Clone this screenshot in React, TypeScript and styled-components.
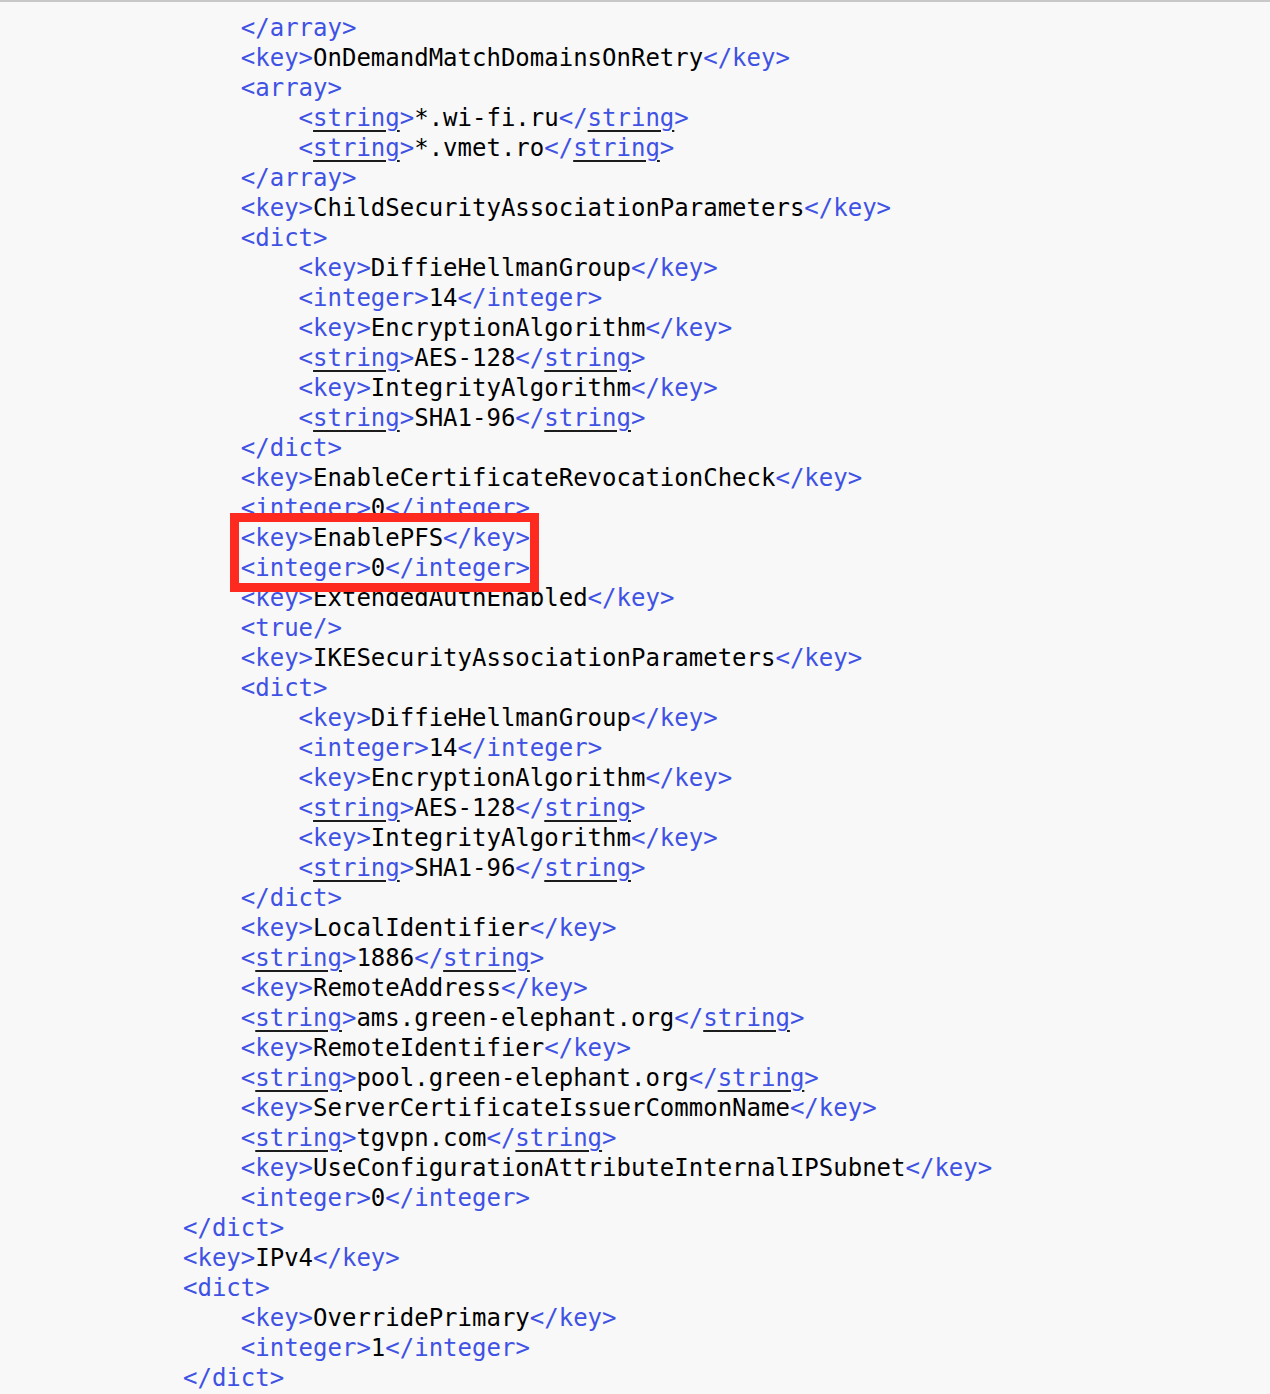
import React from "react"
import styled, { createGlobalStyle } from "styled-components"

type Part = { t: "open" | "close" | "self"; name: string } | { t: "text"; value: string }
type Row = { level: number; parts: Part[] }

const open = (name: string): Part => ({ t: "open", name })
const close = (name: string): Part => ({ t: "close", name })
const text = (value: string): Part => ({ t: "text", value })

const el = (level: number, name: string, value: string): Row => ({
  level,
  parts: [open(name), text(value), close(name)],
})
const tag = (level: number, name: string, closing = false): Row => ({
  level,
  parts: [closing ? close(name) : open(name)],
})

const cryptoDict = (level: number): Row[] => [
  el(level, "key", "DiffieHellmanGroup"),
  el(level, "integer", "14"),
  el(level, "key", "EncryptionAlgorithm"),
  el(level, "string", "AES-128"),
  el(level, "key", "IntegrityAlgorithm"),
  el(level, "string", "SHA1-96"),
]

const before: Row[] = [
  tag(1, "array", true),
  el(1, "key", "OnDemandMatchDomainsOnRetry"),
  tag(1, "array"),
  el(2, "string", "*.wi-fi.ru"),
  el(2, "string", "*.vmet.ro"),
  tag(1, "array", true),
  el(1, "key", "ChildSecurityAssociationParameters"),
  tag(1, "dict"),
  ...cryptoDict(2),
  tag(1, "dict", true),
  el(1, "key", "EnableCertificateRevocationCheck"),
  el(1, "integer", "0"),
]

const highlighted: Row[] = [el(1, "key", "EnablePFS"), el(1, "integer", "0")]

const after: Row[] = [
  el(1, "key", "ExtendedAuthEnabled"),
  { level: 1, parts: [{ t: "self", name: "true" }] },
  el(1, "key", "IKESecurityAssociationParameters"),
  tag(1, "dict"),
  ...cryptoDict(2),
  tag(1, "dict", true),
  el(1, "key", "LocalIdentifier"),
  el(1, "string", "1886"),
  el(1, "key", "RemoteAddress"),
  el(1, "string", "ams.green-elephant.org"),
  el(1, "key", "RemoteIdentifier"),
  el(1, "string", "pool.green-elephant.org"),
  el(1, "key", "ServerCertificateIssuerCommonName"),
  el(1, "string", "tgvpn.com"),
  el(1, "key", "UseConfigurationAttributeInternalIPSubnet"),
  el(1, "integer", "0"),
  tag(0, "dict", true),
  el(0, "key", "IPv4"),
  tag(0, "dict"),
  el(1, "key", "OverridePrimary"),
  el(1, "integer", "1"),
  tag(0, "dict", true),
]

const TagName: React.FC<{ name: string }> = ({ name }) =>
  name === "string" ? <Underlined>{name}</Underlined> : <>{name}</>

const renderPart = (p: Part, i: number) => {
  if (p.t === "text") return <Value key={i}>{p.value}</Value>
  const pre = p.t === "close" ? "</" : "<"
  const post = p.t === "self" ? "/>" : ">"
  return (
    <Tag key={i}>
      {pre}
      <TagName name={p.name} />
      {post}
    </Tag>
  )
}

const Lines: React.FC<{ rows: Row[] }> = ({ rows }) => (
  <>
    {rows.map((r, i) => (
      <Line key={i} $level={r.level}>
        {r.parts.map(renderPart)}
      </Line>
    ))}
  </>
)

export default function App() {
  return (
    <>
      <GlobalStyle />
      <Viewer>
        <Lines rows={before} />
        <Highlight>
          <Lines rows={highlighted} />
        </Highlight>
        <Lines rows={after} />
      </Viewer>
    </>
  )
}

const GlobalStyle = createGlobalStyle`
  html, body {
    margin: 0;
    background: #f8f8f8;
  }
`

const Viewer = styled.div`
  border-top: 2px solid #c8c8c8;
  background: #f8f8f8;
  padding: 11px 0 0 183px;
  height: 1394px;
  box-sizing: border-box;
  overflow: hidden;
  font-family: "DejaVu Sans Mono", "Liberation Mono", monospace;
  font-size: 24px;
  line-height: 30px;
  color: #000;
`

const Line = styled.div<{ $level: number }>`
  padding-left: ${(p) => p.$level * 57.8}px;
  white-space: pre;
  height: 30px;
`

const Tag = styled.span`
  color: #3f52e4;
`

const Value = styled.span`
  color: #000;
`

const Underlined = styled.span`
  text-decoration: underline;
  text-decoration-color: #1c1c1c;
  text-decoration-thickness: 2px;
  text-underline-offset: 4px;
`

const Highlight = styled.div`
  position: relative;
  width: fit-content;

  &::after {
    content: "";
    position: absolute;
    top: -10px;
    bottom: -9px;
    left: 47px;
    right: -9px;
    border: 9px solid #ff2a1f;
    pointer-events: none;
  }
`
